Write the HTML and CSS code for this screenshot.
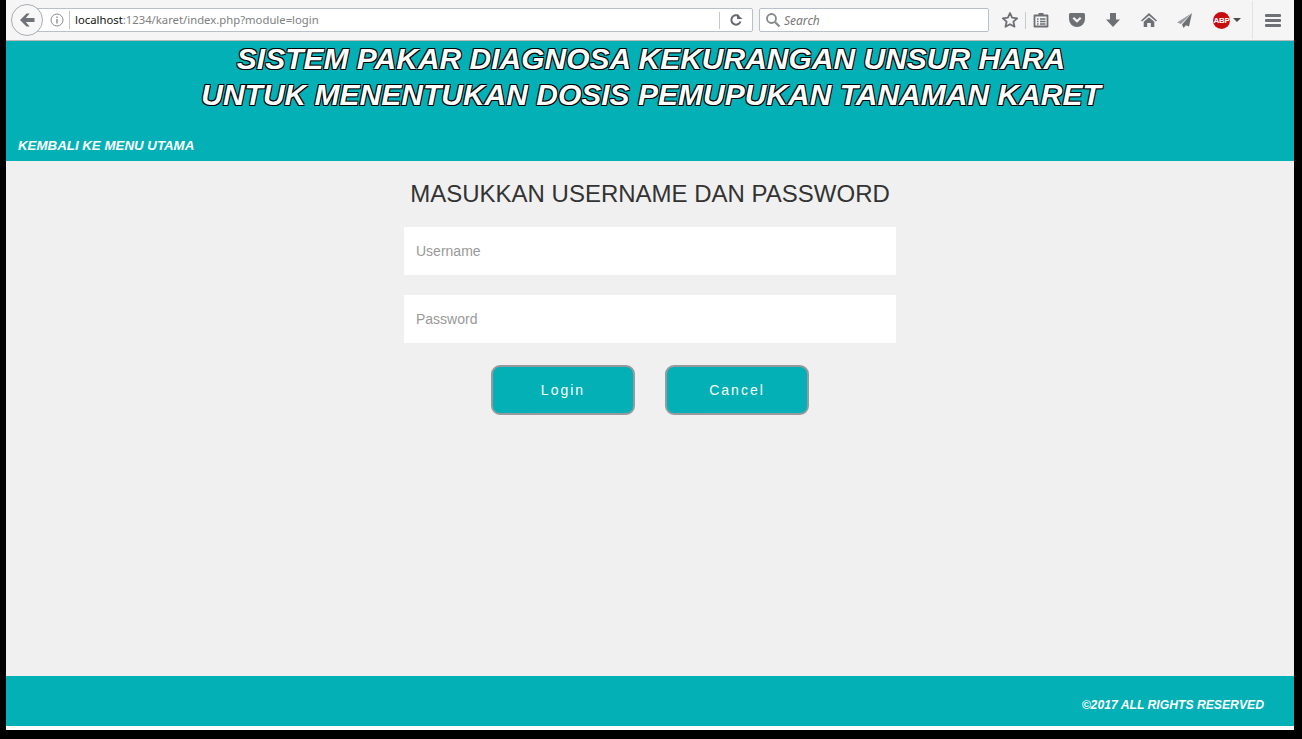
FILE: index.html
```html
<!DOCTYPE html>
<html lang="en">
<head>
    <meta charset="UTF-8">
    <meta name="viewport" content="width=device-width, initial-scale=1.0">
    <title>Sistem Pakar</title>
    <link rel="stylesheet" href="styles.css">
</head>
<body>
    <div class="window">
        <div class="toolbar">
            <div class="back-btn">
                <svg width="18" height="18" viewBox="0 0 18 18"><path d="M8.500 2.500 2 9l6.500 6.500h3.200L7.800 11H16.500V7H7.800l3.900-4.500z" fill="#6f7378"/></svg>
            </div>
            <div class="urlbar">
                <svg class="info" width="14" height="14" viewBox="0 0 14 14"><circle cx="7" cy="7" r="6" fill="none" stroke="#8a8a8a"/><rect x="6.300" y="6" width="1.400" height="4.500" fill="#8a8a8a"/><rect x="6.300" y="3.500" width="1.400" height="1.500" fill="#8a8a8a"/></svg>
                <span class="url"><span class="host">localhost</span>:1234/karet/index.php?module=login</span>
                <span class="reload">
                    <svg width="14" height="14" viewBox="0 0 14 14"><path d="M11.500 8.500A4.700 4.700 0 1 1 9.800 3.100" fill="none" stroke="#65696e" stroke-width="2"/><path d="M8 1v5h5.500z" fill="#65696e"/></svg>
                </span>
            </div>
            <div class="searchbar">
                <svg width="16" height="16" viewBox="0 0 16 16"><circle cx="6.500" cy="6.500" r="4.500" fill="none" stroke="#85898e" stroke-width="1.800"/><path d="M10 10l4.500 4.500" stroke="#85898e" stroke-width="2.200"/></svg>
                <span>Search</span>
            </div>
            <div class="tools">
                <svg class="star" width="18" height="18" viewBox="0 0 18 18"><path d="M9 2l2.100 4.700 5.100.6-3.800 3.400 1.100 5L9 13.200l-4.500 2.500 1.100-5L1.800 7.300l5.100-.6z" fill="none" stroke="#6d7075" stroke-width="1.800" stroke-linejoin="round"/></svg>
                <span class="sep"></span>
                <svg class="list" width="16" height="16" viewBox="0 0 16 16"><path d="M1.500 3.500h13v11h-13z" fill="none" stroke="#6d7075" stroke-width="1.800" stroke-linejoin="round"/><rect x="5.500" y="1" width="5" height="3" fill="#6d7075"/><path d="M4 7h1.500M4 9.500h1.500M4 12h1.500M7 7h5.500M7 9.500h5.500M7 12h5.500" stroke="#6d7075" stroke-width="1.300"/></svg>
                <svg class="pocket" width="18" height="16" viewBox="0 0 18 16"><path d="M2.500 1h13A1.500 1.500 0 0 1 17 2.500V7A8 8 0 0 1 1 7V2.500A1.500 1.500 0 0 1 2.500 1z" fill="#6d7075"/><path d="M5.300 5.700 9 9.300l3.700-3.600" fill="none" stroke="#f5f5f5" stroke-width="2.200"/></svg>
                <svg class="download" width="16" height="16" viewBox="0 0 16 16"><path d="M5 1h6v6.500h4L8 15 1 7.500h4z" fill="#6d7075"/></svg>
                <svg class="home" width="18" height="16" viewBox="0 0 18 16"><path d="M9 1 1 8.500l1 1L9 3.500l7 6 1-1z" fill="#6d7075"/><path d="M3.700 9.800 9 5.200l5.300 4.600V15h-3.500v-4H7.200v4H3.700z" fill="#6d7075"/></svg>
                <svg class="send" width="17" height="17" viewBox="0 0 17 17"><path d="M16 1 1 10.500l4 1.500z" fill="#9a9da1"/><path d="M16 1 6 12.500 7.500 16l2.500-2.800 3 1.300z" fill="#6d7075"/></svg>
                <span class="abp">ABP</span>
                <span class="caret"></span>
                <span class="sep tall"></span>
                <div class="burger"><i></i><i></i><i></i></div>
            </div>
        </div>

        <div class="header">
            <h1>SISTEM PAKAR DIAGNOSA KEKURANGAN UNSUR HARA<br>UNTUK MENENTUKAN DOSIS PEMUPUKAN TANAMAN KARET</h1>
            <a class="menu-link" href="#">KEMBALI KE MENU UTAMA</a>
        </div>

        <div class="content">
            <h2>MASUKKAN USERNAME DAN PASSWORD</h2>
            <form class="login-form">
                <input type="text" placeholder="Username">
                <input type="password" placeholder="Password">
                <div class="buttons">
                    <button type="submit">Login</button>
                    <button type="button">Cancel</button>
                </div>
            </form>
        </div>

        <div class="footer">©2017 ALL RIGHTS RESERVED</div>
    </div>
</body>
</html>
```

FILE: styles.css
```css
html, body {
    margin: 0;
    height: 100%;
    background-color: #000;
    overflow: hidden;
}
body {
    font-family: "Liberation Sans", Arial, sans-serif;
}
.window {
    width: 1288px;
    height: 730px;
    margin-left: 6px;
    background-color: #fff;
    display: flex;
    flex-direction: column;
}
.toolbar {
    height: 40px;
    box-sizing: content-box;
    background-color: #f5f5f5;
    border-bottom: 1px solid #b9b9b9;
    display: flex;
    align-items: center;
    position: relative;
}
.back-btn {
    position: absolute;
    left: 5px;
    top: 4px;
    width: 30px;
    height: 30px;
    border: 1px solid #a9adb3;
    border-radius: 50%;
    background-color: #f7f7f7;
    display: flex;
    align-items: center;
    justify-content: center;
    z-index: 1;
}
.urlbar {
    margin-left: 24px;
    width: 723px;
    height: 24px;
    box-sizing: border-box;
    background-color: #fff;
    border: 1px solid #b8c0cc;
    border-radius: 0 2px 2px 0;
    display: flex;
    align-items: center;
    padding-left: 19px;
    font-family: "Noto Sans", "Open Sans", sans-serif;
    font-size: 11.3px;
    color: #808080;
}
.info {
    margin-right: 5px;
    flex-shrink: 0;
}
.url {
    border-left: 1px solid #c4c4c4;
    padding-left: 5px;
    line-height: 18px;
    flex: 1;
}
.host {
    color: #111;
}
.reload {
    width: 31px;
    height: 17px;
    padding-right: 1px;
    border-left: 1px solid #c8c8c8;
    display: flex;
    align-items: center;
    justify-content: center;
}
.searchbar {
    margin-left: 6px;
    width: 230px;
    height: 24px;
    box-sizing: border-box;
    background-color: #fff;
    border: 1px solid #b8c0cc;
    border-radius: 2px;
    display: flex;
    align-items: center;
    padding-left: 5px;
    gap: 3px;
    font-family: "Noto Sans", "Open Sans", sans-serif;
    font-size: 12px;
    font-style: italic;
    color: #777;
}
.tools {
    display: flex;
    align-items: center;
    height: 100%;
    margin-left: 12px;
}
.sep {
    width: 1px;
    height: 17px;
    margin: 0 7px 0 6px;
    background-color: #c9c9c9;
}
.sep.tall {
    height: 38px;
    margin: 0 12px 0 11px;
    background-color: #e2e2e2;
}
.pocket {
    margin-left: 19px;
}
.download {
    margin-left: 19px;
}
.home {
    margin-left: 19px;
}
.send {
    margin-left: 18px;
}
.abp {
    margin-left: 20px;
    width: 17px;
    height: 17px;
    border-radius: 50%;
    background-color: #c70d10;
    color: #fff;
    font-size: 8px;
    font-weight: bold;
    letter-spacing: -0.3px;
    line-height: 17px;
    text-align: center;
}
.caret {
    margin-left: 3px;
    border-top: 4px solid #4c4c4c;
    border-left: 4px solid transparent;
    border-right: 4px solid transparent;
}
.burger {
    width: 16px;
}
.burger i {
    display: block;
    height: 3px;
    margin: 2px 0;
    border-radius: 1px;
    background-color: #6d7075;
}
.header {
    height: 120px;
    flex-shrink: 0;
    background-color: #02b0b5;
    display: flex;
    flex-direction: column;
    justify-content: space-between;
}
.header h1 {
    margin: 0;
    padding-left: 2px;
    font-size: 30px;
    font-weight: bold;
    font-style: italic;
    line-height: 36px;
    text-align: center;
    color: #fff;
    text-shadow: 1px 1px 0 #000, -1px -1px 0 #000, 1px -1px 0 #000, -1px 1px 0 #000;
}
.menu-link {
    margin: 0 0 7px 12px;
    font-size: 13.3px;
    font-weight: bold;
    font-style: italic;
    line-height: 16px;
    color: #fff;
    text-decoration: none;
}
.content {
    flex: 1;
    background-color: #f0f0f0;
    display: flex;
    flex-direction: column;
    align-items: center;
}
.content h2 {
    margin: 19px 0 0;
    font-size: 24px;
    font-weight: normal;
    line-height: 28px;
    color: #333;
}
.login-form {
    width: 492px;
    margin-top: 19px;
    display: flex;
    flex-direction: column;
    gap: 20px;
}
.login-form input {
    height: 48px;
    box-sizing: border-box;
    border: none;
    padding: 0 12px;
    background-color: #fff;
    font-family: "Liberation Sans", Arial, sans-serif;
    font-size: 14px;
}
.login-form input::placeholder {
    color: #999;
    opacity: 1;
}
.buttons {
    display: flex;
    justify-content: center;
    gap: 30px;
    margin-top: 2px;
}
.buttons button {
    width: 144px;
    height: 50px;
    box-sizing: border-box;
    border: 2px solid #969a9e;
    border-radius: 9px;
    background-color: #02b0b5;
    color: #fff;
    font-family: "Liberation Sans", Arial, sans-serif;
    font-size: 14px;
    letter-spacing: 2px;
}
.footer {
    height: 50px;
    flex-shrink: 0;
    margin-bottom: 4px;
    background-color: #02b0b5;
    box-sizing: border-box;
    padding: 21px 30px 0 0;
    text-align: right;
    font-size: 12.2px;
    font-weight: bold;
    font-style: italic;
    line-height: 16px;
    color: #fff;
}
```
